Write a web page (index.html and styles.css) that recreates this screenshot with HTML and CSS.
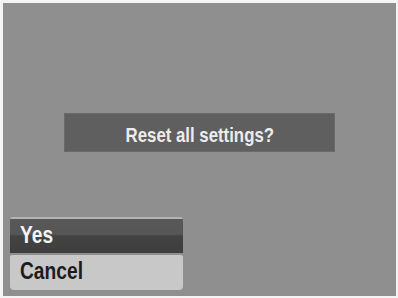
FILE: index.html
```html
<!DOCTYPE html>
<html>
<head>
<meta charset="utf-8">
<link rel="stylesheet" href="styles.css">
</head>
<body>
<div class="screen">
  <div class="dialog"><span class="label">Reset all settings?</span></div>
  <div class="menu">
    <div class="item selected"><span class="label">Yes</span></div>
    <div class="item"><span class="label">Cancel</span></div>
  </div>
</div>
</body>
</html>
```
FILE: styles.css
```css
html, body {
  margin: 0;
  padding: 0;
  background: #f4f4f4;
  width: 398px;
  height: 298px;
  overflow: hidden;
}
.screen {
  margin: 3px 2px 0 3px;
  width: 393px;
  height: 293px;
  background: #8f8f8f;
  display: flex;
  flex-direction: column;
  font-family: "Liberation Sans", Arial, sans-serif;
  font-weight: bold;
  box-sizing: border-box;
  padding: 111px 0 6px 7px;
}
.label {
  display: inline-block;
  white-space: nowrap;
}
.dialog {
  align-self: center;
  margin-left: -7px;
  width: 269px;
  height: 37px;
  background: #5f5f5f;
  color: #ececec;
  font-size: 21px;
  display: flex;
  align-items: center;
  justify-content: center;
  padding-top: 4px;
  box-sizing: border-box;
  box-shadow: 0 0 0 1px #6a6a6a;
}
.dialog .label {
  transform: scaleX(0.80);
}
.menu {
  margin-top: auto;
  width: 173px;
  display: flex;
  flex-direction: column;
  gap: 2px;
  border-top: 2px solid #b4b4b4;
  border-radius: 3px 3px 0 0;
}
.item {
  height: 35px;
  font-size: 24px;
  display: flex;
  align-items: center;
  padding: 0 0 3px 10px;
  box-sizing: border-box;
  background: #c8c8c8;
  color: #1c1c1c;
  border-radius: 2px 2px 4px 4px;
}
.item .label {
  transform: scaleX(0.80);
  transform-origin: left center;
}
.item.selected {
  height: 34px;
  background: linear-gradient(#585858 0%, #565656 45%, #424242 50%, #3f3f3f 100%);
  color: #f4f4f4;
  border-radius: 0;
}
```
